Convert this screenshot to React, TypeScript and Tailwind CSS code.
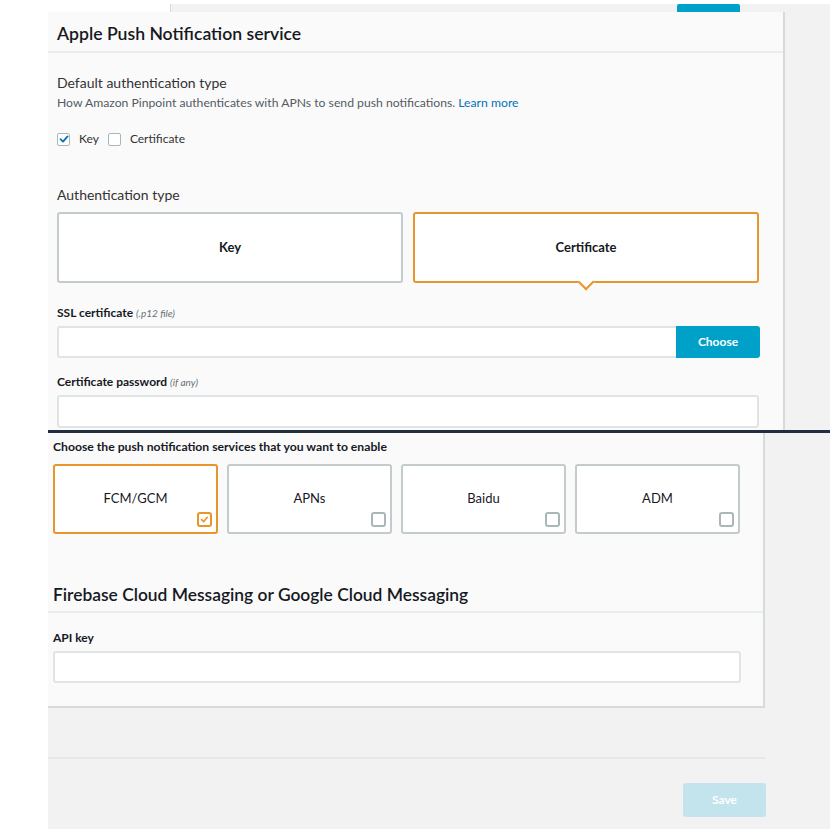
import React from "react";

const FONT = { fontFamily: "Lato, 'Open Sans', Roboto, sans-serif" };

function SmallCheck({ checked }: { checked: boolean }) {
  return (
    <span className="flex h-[13px] w-[13px] items-center justify-center rounded-[2px] border border-[#aab7b8] bg-white">
      {checked && (
        <svg width="10" height="10" viewBox="0 0 10 10">
          <path d="M1.5 5.2 L4 7.6 L8.6 2.4" fill="none" stroke="#0073bb" strokeWidth="1.8" strokeLinecap="round" strokeLinejoin="round" />
        </svg>
      )}
    </span>
  );
}

function TileCheck({ checked }: { checked: boolean }) {
  return (
    <span
      className={`flex h-[15px] w-[15px] items-center justify-center rounded-[3px] border-2 bg-white ${
        checked ? "border-[#e8962b]" : "border-[#aab7b8]"
      }`}
    >
      {checked && (
        <svg width="9" height="9" viewBox="0 0 10 10">
          <path d="M1.8 5.2 L4 7.4 L8.2 2.6" fill="none" stroke="#e8962b" strokeWidth="1.8" strokeLinecap="round" strokeLinejoin="round" />
        </svg>
      )}
    </span>
  );
}

const services = [
  { id: "fcm", label: "FCM/GCM", on: true },
  { id: "apns", label: "APNs", on: false },
  { id: "baidu", label: "Baidu", on: false },
  { id: "adm", label: "ADM", on: false },
];

export default function App() {
  return (
    <div className="h-[829px] w-[830px] overflow-hidden bg-white text-[#16191f]" style={FONT}>
      {/* sliver of the previous screen */}
      <div className="pt-[4px]">
        <div className="ml-[170px] flex h-[8px] border-l border-[#d5dbdb] bg-[#f2f2f2]">
          <div className="ml-[506px] h-full w-[63px] rounded-t-[2px] bg-[#00a1c9]" />
        </div>
      </div>

      {/* APNs panel */}
      <div className="ml-[48px] flex h-[418px]">
        <div className="w-[737px] border-r-2 border-[#d5dbdb] bg-[#fafafa]">
          <div className="h-[41px] border-b-2 border-[#eaeded] pl-[9px] pt-[11px] text-[17.6px] font-semibold leading-[22px]">
            Apple Push Notification service
          </div>
          <div className="pl-[9px] pr-[23px]">
            <div className="mt-[20px] text-[14px] leading-[20px] text-[#333]">Default authentication type</div>
            <div className="mt-[1px] text-[12.2px] leading-[17px] text-[#545b64]">
              How Amazon Pinpoint authenticates with APNs to send push notifications.{" "}
              <span className="text-[#0073bb]">Learn more</span>
            </div>
            <div className="mt-[20px] flex items-center text-[12px] leading-[16px] text-[#333]">
              <SmallCheck checked />
              <span className="ml-[9px]">Key</span>
              <span className="ml-[9px]">
                <SmallCheck checked={false} />
              </span>
              <span className="ml-[9px]">Certificate</span>
            </div>
            <div className="mt-[38px] text-[14px] leading-[20px] text-[#333]">Authentication type</div>
            <div className="mt-[7px] flex gap-[10px]">
              <div className="flex h-[71px] w-[346px] items-center justify-center rounded-[3px] border-2 border-[#c3cbcc] bg-white text-[13px] font-bold">
                Key
              </div>
              <div className="relative flex h-[71px] w-[346px] items-center justify-center rounded-[3px] border-2 border-[#e8962b] bg-white text-[13px] font-bold">
                Certificate
                <span className="absolute bottom-[-7px] left-1/2 h-[12px] w-[12px] -translate-x-1/2 rotate-45 border-b-2 border-r-2 border-[#e8962b] bg-white" />
              </div>
            </div>
            <div className="mt-[22px] text-[12px] font-bold leading-[16px]">
              SSL certificate <span className="text-[10px] font-normal italic text-[#687078]">(.p12 file)</span>
            </div>
            <div className="mt-[5px] flex h-[32px]">
              <div className="flex-1 rounded-l-[3px] border-2 border-r-0 border-[#dfe4e4] bg-white" />
              <div className="flex w-[84px] items-center justify-center rounded-r-[3px] bg-[#00a1c9] text-[12px] font-bold text-white">
                Choose
              </div>
            </div>
            <div className="mt-[16px] text-[12px] font-bold leading-[16px]">
              Certificate password <span className="text-[10px] font-normal italic text-[#687078]">(if any)</span>
            </div>
            <div className="mt-[5px] h-[33px] w-[702px] rounded-[3px] border-2 border-[#dfe4e4] bg-white" />
          </div>
        </div>
        <div className="flex-1 bg-[#f2f2f2]" />
      </div>

      <div className="ml-[48px] h-[3px] bg-[#232f3e]" />

      {/* services panel */}
      <div className="ml-[48px] h-[396px] bg-[#f2f2f2]">
        <div className="w-[717px] border-b-2 border-r-2 border-[#d5dbdb] bg-[#fafafa]">
          <div className="pl-[5px] pt-[6px] text-[12.2px] font-bold leading-[16px]">
            Choose the push notification services that you want to enable
          </div>
          <div className="ml-[5px] mt-[9px] flex gap-[9px]">
            {services.map((s) => (
              <div
                key={s.id}
                className={`relative flex h-[70px] w-[165px] items-center justify-center rounded-[3px] border-2 bg-white text-[13px] ${
                  s.on ? "border-[#e8962b]" : "border-[#c3cbcc]"
                }`}
              >
                <span className="-mt-[1px]">{s.label}</span>
                <span className="absolute bottom-[5px] right-[4px]">
                  <TileCheck checked={s.on} />
                </span>
              </div>
            ))}
          </div>
          <div className="mt-[50px] h-[29px] border-b-2 border-[#eaeded] pl-[5px] text-[17.4px] font-semibold leading-[22px]">
            Firebase Cloud Messaging or Google Cloud Messaging
          </div>
          <div className="pl-[5px] pt-[17px] text-[12px] font-bold leading-[16px]">API key</div>
          <div className="ml-[5px] mt-[5px] h-[32px] w-[688px] rounded-[3px] border-2 border-[#dfe4e4] bg-white" />
          <div className="h-[23px]" />
        </div>
        <div className="mt-[49px] h-[2px] w-[717px] bg-[#e8e8e8]" />
        <div className="flex w-[718px] justify-end pt-[24px]">
          <div className="flex h-[34px] w-[83px] items-center justify-center rounded-[3px] bg-[#c3e4ec] text-[12px] font-bold text-white">
            Save
          </div>
        </div>
      </div>
    </div>
  );
}
